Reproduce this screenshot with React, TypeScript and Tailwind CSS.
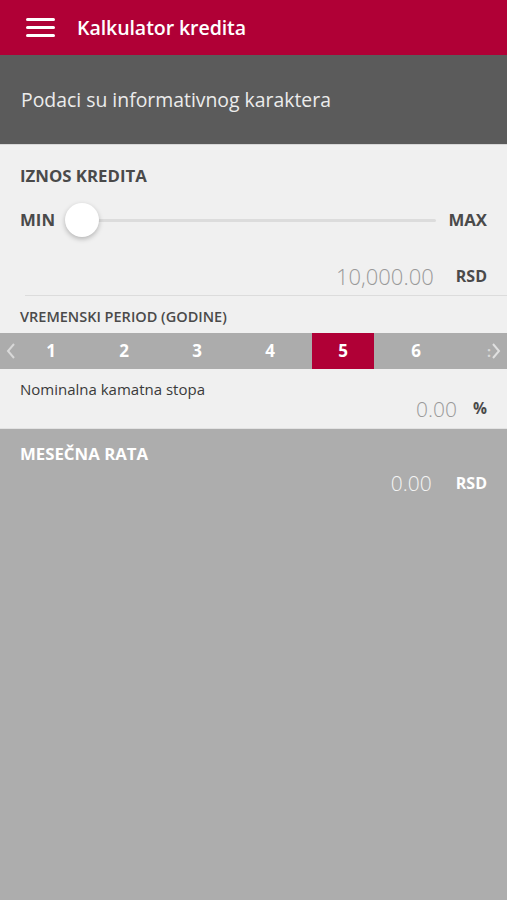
import React from "react";

export default function App() {
  const years = [1, 2, 3, 4, 5, 6];
  return (
    <div
      className="w-[507px] h-[900px] flex flex-col bg-[#adadad] overflow-hidden"
      style={{ fontFamily: '"Open Sans", "Noto Sans", sans-serif' }}
    >
      {/* Header */}
      <div className="h-[55px] bg-[#b00036] flex items-center shrink-0">
        <div className="ml-[26px] w-[29px] flex flex-col gap-[5px]">
          <div className="h-[3px] bg-white rounded-sm" />
          <div className="h-[3px] bg-white rounded-sm" />
          <div className="h-[3px] bg-white rounded-sm" />
        </div>
        <div className="ml-[22px] text-white text-[19.6px] font-semibold tracking-[-0.1px]">
          Kalkulator kredita
        </div>
      </div>

      {/* Info band */}
      <div className="h-[89px] bg-[#5b5b5b] flex items-center px-[21px] shrink-0">
        <div className="text-[#ececec] text-[19.4px] leading-none">Podaci su informativnog karaktera</div>
      </div>

      {/* Light section */}
      <div className="bg-[#f0f0f0] border-t border-[#d8d8d8] border-b border-b-[#e2e2e2] shrink-0">
        <div className="pt-[21px] px-[20px] text-[16.8px] font-bold text-[#4a4a4a] leading-[20px]">
          IZNOS KREDITA
        </div>
        <div className="mt-[16px] h-[36px] flex items-center px-[20px]">
          <div className="text-[16.8px] font-bold text-[#4a4a4a]">MIN</div>
          <div className="flex-1 relative h-[36px] flex items-center ml-[10px] mr-[12px]">
            <div className="absolute left-[16px] right-0 h-[3px] bg-[#dcdcdc] rounded" />
            <div className="relative w-[34px] h-[34px] rounded-full bg-white shadow-[0_2px_5px_rgba(0,0,0,0.25)]" />
          </div>
          <div className="text-[16.8px] font-bold text-[#4a4a4a]">MAX</div>
        </div>
        <div className="mt-[25px] flex items-center justify-end pr-[20px] h-[26px]">
          <div className="text-[22px] font-light text-[#9a9a9a] leading-none">10,000.00</div>
          <div className="ml-[22px] text-[16px] font-bold text-[#4a4a4a] leading-none text-right">RSD</div>
        </div>
        <div className="mt-[6px] ml-[25px] h-px bg-[#dcdcdc]" />
        <div className="pt-[12px] px-[20px] text-[14.5px] font-semibold text-[#4a4a4a] leading-[18px]">
          VREMENSKI PERIOD (GODINE)
        </div>
        <div className="mt-[7px] relative h-[36px] bg-[#acacac] flex pl-[20px] gap-[11px]">
          {years.map((y) => (
            <div
              key={y}
              className={
                y === 5
                  ? "w-[62px] h-full bg-[#b00036] flex items-center justify-center text-white text-[17px] font-bold"
                  : "w-[62px] h-full flex items-center justify-center text-white text-[17px] font-bold"
              }
            >
              {y}
            </div>
          ))}
          <div className="absolute left-[4px] top-0 h-full flex items-center">
            <svg width="14" height="18" viewBox="0 0 14 18">
              <path d="M10 2 L4 9 L10 16" stroke="#d8d8d8" strokeWidth="2" fill="none" />
            </svg>
          </div>
          <div className="absolute right-[4px] top-0 h-full flex items-center">
            <span className="text-[#d8d8d8] text-[14px] font-bold mr-[-2px]">:</span>
            <svg width="14" height="18" viewBox="0 0 14 18">
              <path d="M4 2 L10 9 L4 16" stroke="#e0e0e0" strokeWidth="2" fill="none" />
            </svg>
          </div>
        </div>
        <div className="pt-[11px] px-[20px] text-[15px] text-[#3a3a3a] leading-[18px]">
          Nominalna kamatna stopa
        </div>
        <div className="mt-[-2px] flex items-center justify-end pr-[20px] h-[26px]">
          <div className="text-[21px] font-light text-[#9a9a9a] leading-none">0.00</div>
          <div className="ml-[16px] text-[15.5px] font-bold text-[#4a4a4a] leading-none">%</div>
        </div>
        <div className="h-[6px]" />
      </div>

      {/* Result */}
      <div className="pt-[15px] px-[20px]">
        <div className="text-[16.8px] font-bold text-white leading-[20px]">MESEČNA RATA</div>
        <div className="mt-[6px] flex items-center justify-end h-[26px]">
          <div className="text-[21px] font-light text-[#f4f4f4] leading-none">0.00</div>
          <div className="ml-[24px] text-[16px] font-bold text-white leading-none">RSD</div>
        </div>
      </div>
    </div>
  );
}
